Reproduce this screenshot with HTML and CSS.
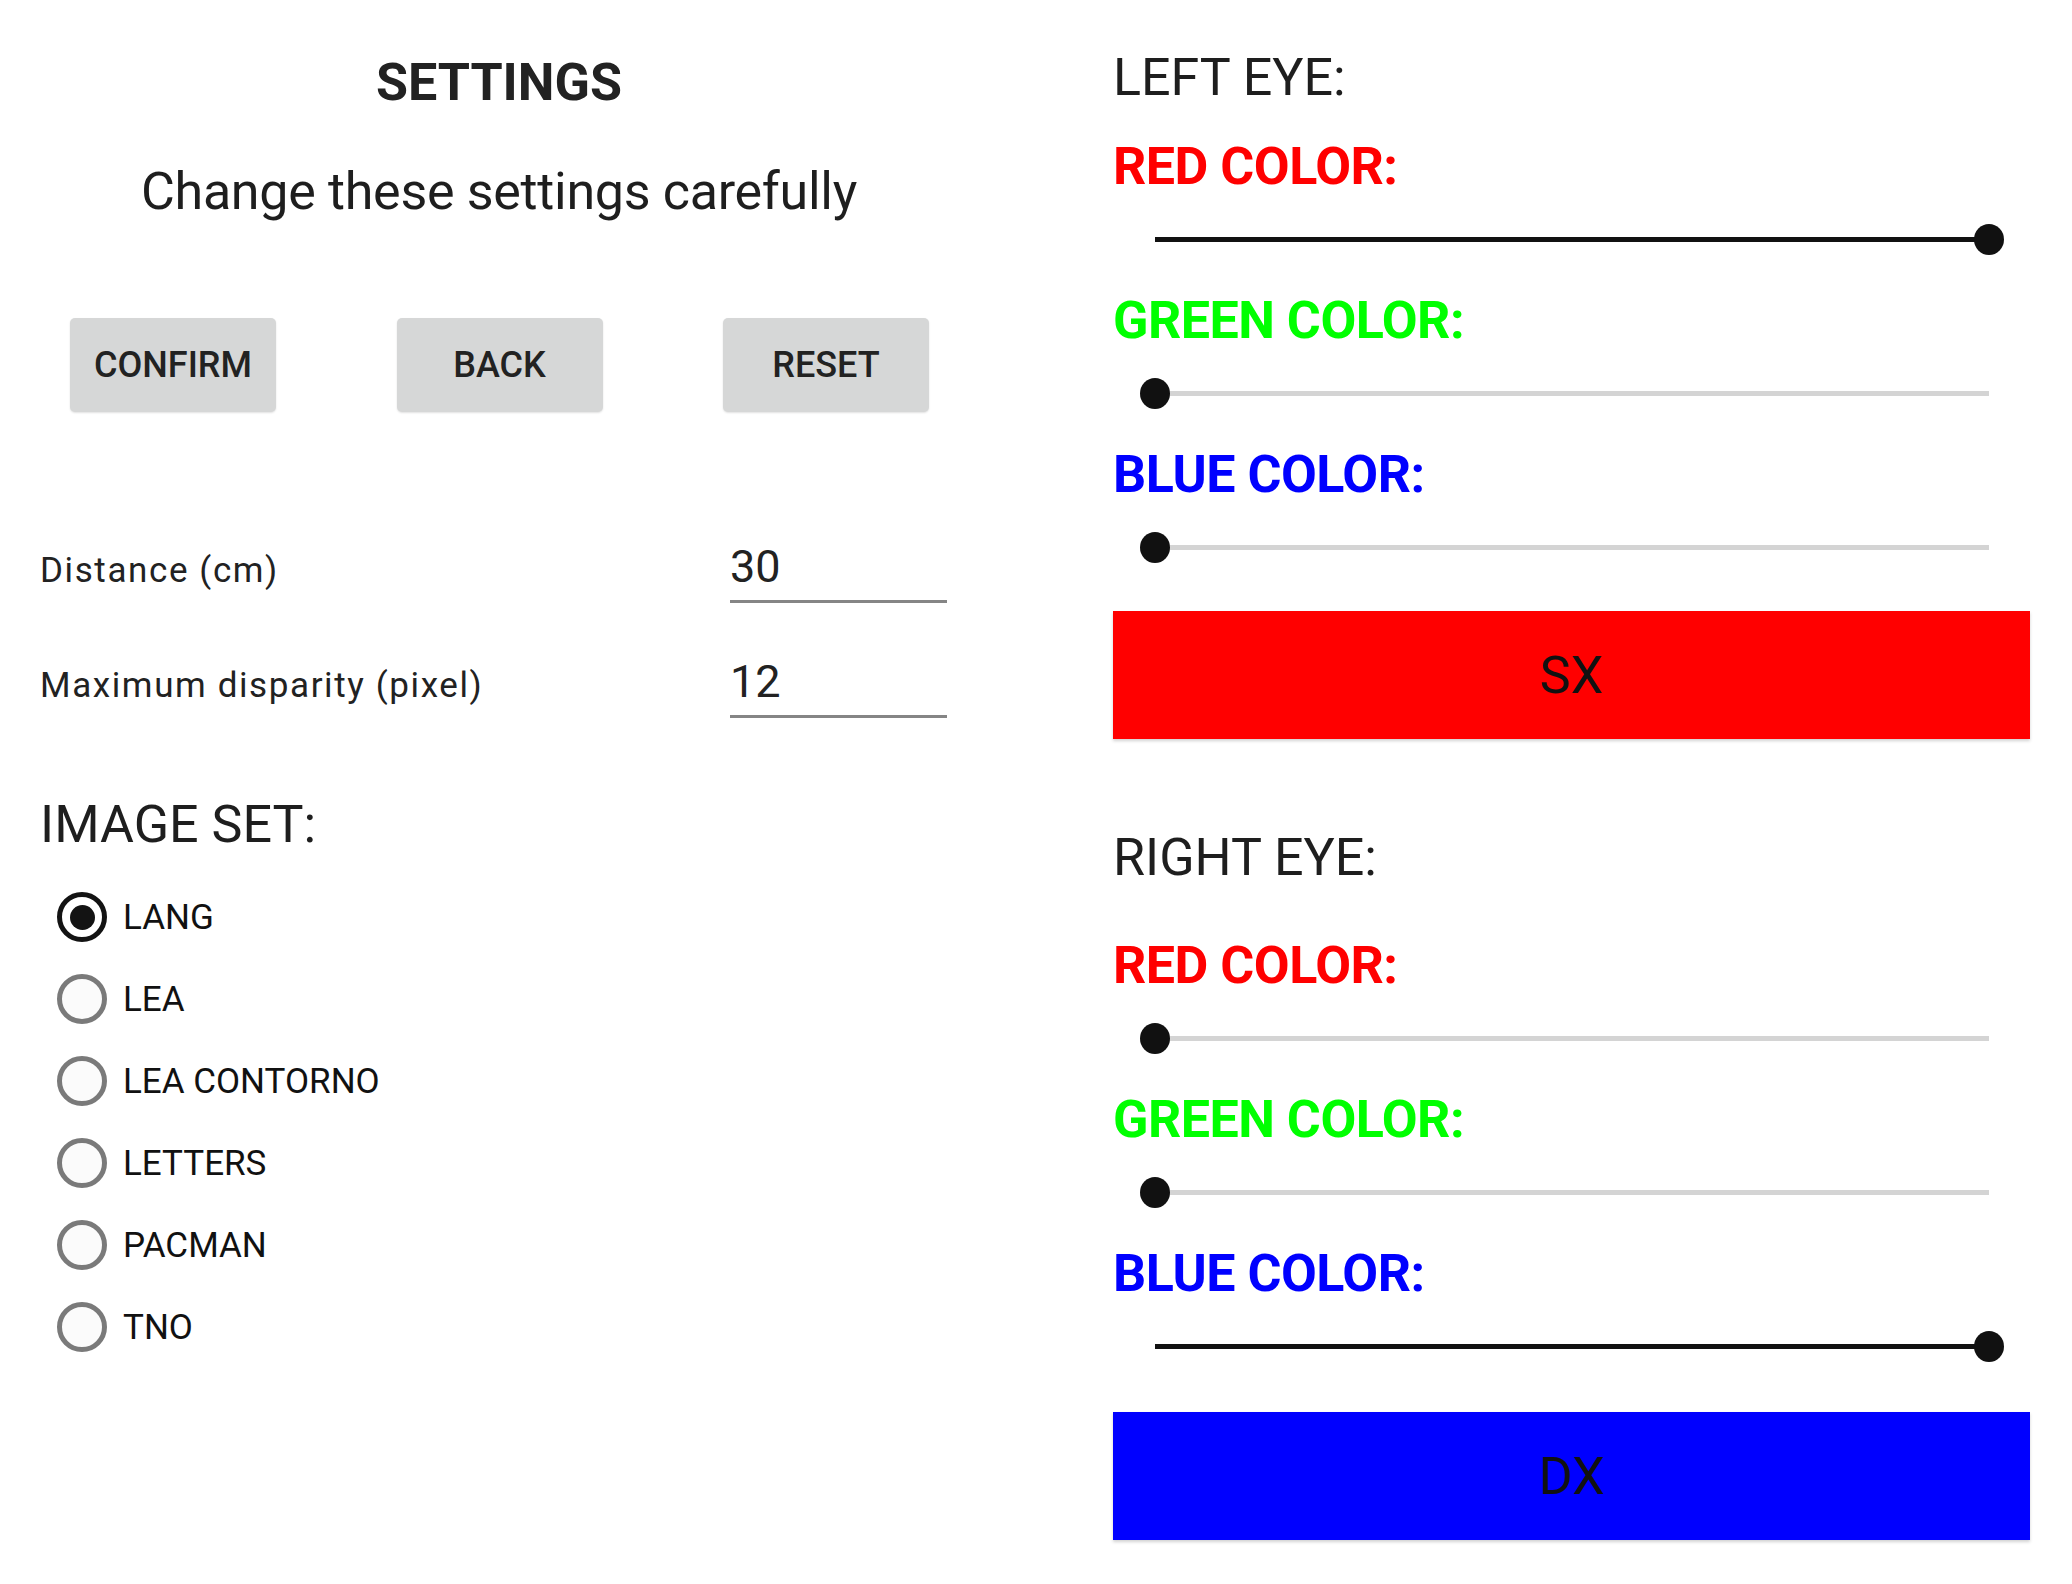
FILE: index.html
```html
<!DOCTYPE html>
<html lang="en">
<head>
<meta charset="utf-8">
<title>Settings</title>
<link rel="stylesheet" href="styles.css">
</head>
<body>
<div class="page">
  <section class="left">
    <h1 class="title">SETTINGS</h1>
    <p class="subtitle">Change these settings carefully</p>
    <div class="buttons">
      <button class="btn">CONFIRM</button>
      <button class="btn">BACK</button>
      <button class="btn">RESET</button>
    </div>
    <div class="fields">
      <div class="field">
        <span class="field-label">Distance (cm)</span>
        <span class="field-input">30</span>
      </div>
      <div class="field">
        <span class="field-label">Maximum disparity (pixel)</span>
        <span class="field-input">12</span>
      </div>
    </div>
    <h2 class="heading image-set">IMAGE SET:</h2>
    <ul class="radios">
      <li class="radio"><span class="radio-circle checked"></span><span class="radio-label">LANG</span></li>
      <li class="radio"><span class="radio-circle"></span><span class="radio-label">LEA</span></li>
      <li class="radio"><span class="radio-circle"></span><span class="radio-label">LEA CONTORNO</span></li>
      <li class="radio"><span class="radio-circle"></span><span class="radio-label">LETTERS</span></li>
      <li class="radio"><span class="radio-circle"></span><span class="radio-label">PACMAN</span></li>
      <li class="radio"><span class="radio-circle"></span><span class="radio-label">TNO</span></li>
    </ul>
  </section>

  <section class="right">
    <h2 class="heading eye-title first">LEFT EYE:</h2>
    <div class="channel red first-channel">RED COLOR:</div>
    <div class="slider"><div class="track"><div class="fill" style="width:100%"></div></div><span class="thumb" style="left:100%"></span></div>
    <div class="channel green">GREEN COLOR:</div>
    <div class="slider"><div class="track"><div class="fill" style="width:0%"></div></div><span class="thumb" style="left:0%"></span></div>
    <div class="channel blue">BLUE COLOR:</div>
    <div class="slider"><div class="track"><div class="fill" style="width:0%"></div></div><span class="thumb" style="left:0%"></span></div>
    <div class="preview preview-red">SX</div>

    <h2 class="heading eye-title second">RIGHT EYE:</h2>
    <div class="channel red first-channel second-eye">RED COLOR:</div>
    <div class="slider"><div class="track"><div class="fill" style="width:0%"></div></div><span class="thumb" style="left:0%"></span></div>
    <div class="channel green">GREEN COLOR:</div>
    <div class="slider"><div class="track"><div class="fill" style="width:0%"></div></div><span class="thumb" style="left:0%"></span></div>
    <div class="channel blue">BLUE COLOR:</div>
    <div class="slider"><div class="track"><div class="fill" style="width:100%"></div></div><span class="thumb" style="left:100%"></span></div>
    <div class="preview preview-blue">DX</div>
  </section>
</div>
</body>
</html>
```

FILE: styles.css
```css
* { box-sizing: border-box; }

html, body {
  margin: 0;
  padding: 0;
  background: #ffffff;
}

body {
  font-family: Roboto, "Noto Sans", "Liberation Sans", sans-serif;
  color: #222222;
  width: 2072px;
  height: 1584px;
  overflow: hidden;
}

.page {
  display: flex;
  align-items: flex-start;
}

/* ---------- LEFT COLUMN ---------- */
.left {
  width: 998px;
  flex: 0 0 998px;
  padding-top: 52px;
}

.title {
  margin: 0;
  font-size: 52px;
  line-height: 61px;
  font-weight: 700;
  text-align: center;
  color: #222222;
}

.subtitle {
  margin: 48px 0 0;
  font-size: 52px;
  line-height: 61px;
  font-weight: 400;
  letter-spacing: -0.3px;
  text-align: center;
  color: #1e1e1e;
}

.buttons {
  margin-top: 96px;
  display: flex;
  justify-content: space-between;
  padding: 0 69px 0 70px;
}

.btn {
  width: 206px;
  height: 94px;
  border: none;
  border-radius: 5px;
  background: #d6d7d7;
  box-shadow: 0 1px 2px rgba(0, 0, 0, 0.12);
  font-family: Roboto, "Noto Sans", sans-serif;
  font-size: 36px;
  font-weight: 500;
  color: #222222;
  padding: 0;
  text-align: center;
}

.fields {
  margin-top: 129px;
  padding-left: 40px;
}

.field {
  display: flex;
  align-items: baseline;
}

.field + .field {
  margin-top: 53px;
}

.field-label {
  flex: 0 0 690px;
  font-size: 35px;
  line-height: 41px;
  letter-spacing: 1.6px;
  color: #222222;
}

.field-input {
  display: block;
  width: 217px;
  font-size: 45px;
  line-height: 52px;
  padding: 0 0 7px 0;
  border-bottom: 3px solid #858585;
  color: #222222;
}

.heading {
  margin: 0;
  font-size: 52px;
  line-height: 61px;
  font-weight: 400;
  color: #1e1e1e;
}

.image-set {
  margin-top: 76px;
  padding-left: 40px;
}

.radios {
  list-style: none;
  margin: 21px 0 0;
  padding: 0 0 0 57px;
}

.radio {
  height: 82px;
  display: flex;
  align-items: center;
}

.radio-circle {
  width: 50px;
  height: 50px;
  flex: 0 0 50px;
  border-radius: 50%;
  border: 5px solid #7a7a7a;
  background: #fbfbfb;
  display: flex;
  align-items: center;
  justify-content: center;
}

.radio-circle.checked {
  border-color: #131313;
  background: #ffffff;
}

.radio-circle.checked::after {
  content: "";
  width: 25px;
  height: 25px;
  border-radius: 50%;
  background: #131313;
}

.radio-label {
  margin-left: 16px;
  font-size: 35px;
  line-height: 41px;
  color: #111111;
}

/* ---------- RIGHT COLUMN ---------- */
.right {
  width: 917px;
  flex: 0 0 917px;
  margin-left: 115px;
  padding-top: 47px;
}

.eye-title.second {
  margin-top: 88px;
}

.channel {
  font-size: 52px;
  line-height: 61px;
  font-weight: 700;
  letter-spacing: -0.5px;
  margin-top: 30px;
}

.channel.first-channel {
  margin-top: 28px;
}

.channel.second-eye {
  margin-top: 47px;
}

.red { color: #ff0000; }
.green { color: #00ff00; }
.blue { color: #0000ff; }

.slider {
  position: relative;
  height: 40px;
  margin: 23px 41px 0 42px;
  padding-top: 17px;
}

.track {
  height: 5px;
  background: #d4d4d4;
}

.fill {
  height: 100%;
  background: #111111;
}

.thumb {
  position: absolute;
  top: 4px;
  width: 30px;
  height: 31px;
  margin-left: -15px;
  border-radius: 50%;
  background: #111111;
}

.preview {
  margin-top: 43px;
  height: 128px;
  display: flex;
  align-items: center;
  justify-content: center;
  font-size: 52px;
  font-weight: 400;
  color: #111111;
  box-shadow: 0 2px 3px rgba(0, 0, 0, 0.18);
}

.preview-red { background: #ff0000; }

.preview-blue {
  background: #0000ff;
  margin-top: 45px;
}
```
